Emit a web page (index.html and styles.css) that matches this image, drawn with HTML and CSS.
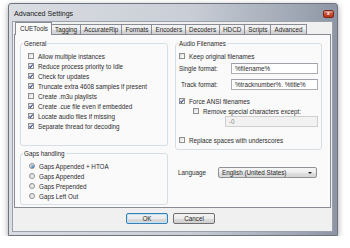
FILE: index.html
```html
<!DOCTYPE html>
<html lang="en">
<head>
<meta charset="UTF-8">
<title>Advanced Settings</title>
<link rel="stylesheet" href="styles.css">
</head>
<body>
    <div class="window">
        <div class="titlebar">
            <span class="title">Advanced Settings</span>
            <span class="close">x</span>
        </div>
        <div class="client">
            <div class="tabs">
                <span class="tab selected">CUETools</span>
                <span class="tab">Tagging</span>
                <span class="tab">AccurateRip</span>
                <span class="tab">Formats</span>
                <span class="tab">Encoders</span>
                <span class="tab">Decoders</span>
                <span class="tab">HDCD</span>
                <span class="tab">Scripts</span>
                <span class="tab">Advanced</span>
            </div>
            <div class="panel">
                <div class="col left">
                    <fieldset class="group general">
                        <legend>General</legend>
                        <div class="row"><span class="cb"></span>Allow multiple instances</div>
                        <div class="row"><span class="cb on"></span>Reduce process priority to Idle</div>
                        <div class="row"><span class="cb on"></span>Check for updates</div>
                        <div class="row"><span class="cb on"></span>Truncate extra 4608 samples if present</div>
                        <div class="row"><span class="cb"></span>Create .m3u playlists</div>
                        <div class="row"><span class="cb on"></span>Create .cue file even if embedded</div>
                        <div class="row"><span class="cb on"></span>Locate audio files if missing</div>
                        <div class="row"><span class="cb on"></span>Separate thread for decoding</div>
                    </fieldset>
                    <fieldset class="group gaps">
                        <legend>Gaps handling</legend>
                        <div class="row"><span class="rb on"></span>Gaps Appended + HTOA</div>
                        <div class="row"><span class="rb"></span>Gaps Appended</div>
                        <div class="row"><span class="rb"></span>Gaps Prepended</div>
                        <div class="row"><span class="rb"></span>Gaps Left Out</div>
                    </fieldset>
                </div>
                <div class="col right">
                    <fieldset class="group audio">
                        <legend>Audio Filenames</legend>
                        <div class="row"><span class="cb"></span>Keep original filenames</div>
                        <div class="field single">
                            <span class="label">Single format:</span>
                            <span class="input">%filename%</span>
                        </div>
                        <div class="field track">
                            <span class="label">Track format:</span>
                            <span class="input">%tracknumber%. %title%</span>
                        </div>
                        <div class="row ansi"><span class="cb on"></span>Force ANSI filenames</div>
                        <div class="row sub"><span class="cb"></span>Remove special characters except:</div>
                        <div class="field except">
                            <span class="input disabled">-0</span>
                        </div>
                        <div class="row replace"><span class="cb"></span>Replace spaces with underscores</div>
                    </fieldset>
                    <div class="lang-row">
                        <span class="label">Language</span>
                        <span class="select">English (United States)<span class="arrow"></span></span>
                    </div>
                </div>
            </div>
            <div class="buttons">
                <span class="btn default">OK</span>
                <span class="btn">Cancel</span>
            </div>
        </div>
    </div>
</body>
</html>
```

FILE: styles.css
```css
body {
    margin: 0;
    background-color: #fff;
    font-family: 'Liberation Sans', Arial, sans-serif;
    font-size: 6.3px;
    color: #2a2a2a;
}
.window {
    box-sizing: border-box;
    width: 330px;
    height: 233px;
    margin: 3px 0 0 8px;
    padding: 0 4px 3px 3px;
    border: 1px solid #6d7480;
    border-radius: 3px 3px 0 0;
    background: linear-gradient(to right, #dadde2, #c9ced6 55%, #a3aab7 85%, #8d95a4);
    box-shadow: 0 2px 6px rgba(0, 0, 0, 0.35);
    display: flex;
    flex-direction: column;
}
.titlebar {
    height: 17px;
    display: flex;
    align-items: center;
    justify-content: space-between;
    padding-left: 2px;
}
.title {
    font-size: 7.1px;
    color: #222;
    margin-top: 2px;
}
.close {
    width: 9px;
    height: 6px;
    margin: 2px -1px 0 0;
    border: 1px solid #7a2a1c;
    border-radius: 2px;
    background: linear-gradient(#e39a86, #c94a30 50%, #b8321b);
    color: #fff;
    font-size: 5px;
    line-height: 5px;
    text-align: center;
    font-weight: bold;
}
.client {
    flex: 1;
    border: 1px solid #9aa1ac;
    background-color: #f0f0f0;
    padding: 1px 1px 0 1px;
}
.tabs {
    display: flex;
    height: 11px;
    padding-left: 3px;
    align-items: flex-end;
}
.tab {
    height: 9px;
    line-height: 9px;
    padding: 0 3px;
    border: 1px solid #898c95;
    border-bottom: none;
    margin-right: -1px;
    background: linear-gradient(#f4f4f4, #ebebeb 50%, #dddddd 51%, #d0d0d0);
}
.tab.selected {
    height: 12px;
    line-height: 11px;
    margin: 0 -1px -1px -2px;
    padding: 0 3px 0 4px;
    background: #fafafa;
    position: relative;
    z-index: 1;
}
.panel {
    box-sizing: border-box;
    height: 174px;
    border: 1px solid #898c95;
    background-color: #fafafa;
    padding: 5px 0 0 5px;
    display: flex;
    gap: 7px;
}
.col {
    display: flex;
    flex-direction: column;
}
.col.left {
    width: 148px;
}
.col.right {
    width: 145px;
}
.group {
    margin: 0;
    border: 1px solid #d5dfe5;
    border-radius: 3px;
    padding: 0 3px;
}
.group legend {
    padding: 0 1px;
    height: 7px;
    line-height: 7px;
}
.row {
    display: flex;
    align-items: center;
    height: 10px;
}
.general {
    padding: 4px 4px 14px 2px;
}
.general .row {
    padding-left: 5px;
}
.gaps {
    margin-top: 4px;
    padding: 4px 4px 3px 2px;
}
.gaps .row {
    padding-left: 6px;
}
.audio {
    padding: 4px 3px 4px 2px;
}
.audio .row,
.audio .field {
    margin-left: 1px;
}
.cb {
    box-sizing: border-box;
    width: 6px;
    height: 6px;
    margin-right: 4px;
    border: 1px solid #8e8f8f;
    background: linear-gradient(135deg, #d8d8d8, #f6f6f6 70%, #fff);
    position: relative;
    flex: none;
}
.cb.on::after {
    content: '';
    position: absolute;
    left: 1px;
    top: -0.5px;
    width: 1.3px;
    height: 3px;
    border: solid #33468a;
    border-width: 0 1.2px 1.2px 0;
    transform: rotate(40deg);
}
.rb {
    box-sizing: border-box;
    width: 6px;
    height: 6px;
    margin-right: 4px;
    border: 1px solid #8e8f8f;
    border-radius: 50%;
    background: linear-gradient(135deg, #d8d8d8, #f8f8f8);
    position: relative;
    flex: none;
}
.rb.on::after {
    content: '';
    position: absolute;
    left: 0.5px;
    top: 0.5px;
    width: 3px;
    height: 3px;
    border-radius: 50%;
    background: radial-gradient(circle at 35% 35%, #8fc2f0, #1c5fa6);
}
.field {
    display: flex;
    align-items: center;
}
.field .label {
    width: 52px;
}
.field.single {
    margin-top: 2px;
}
.field.track {
    margin-top: 5px;
}
.field.track .label {
    padding-left: 2px;
    width: 50px;
}
.input {
    box-sizing: border-box;
    width: 87px;
    height: 11px;
    line-height: 9px;
    padding: 0 3px;
    border: 1px solid #abadb3;
    border-top-color: #9ea1a8;
    background: #fff;
}
.input.disabled {
    width: 93px;
    background: #f2f2f2;
    border-color: #cfcfcf;
    color: #8a8a8a;
}
.field.except {
    padding-left: 46px;
}
.row.ansi {
    margin-top: 6px;
}
.row.sub {
    padding-left: 14px;
}
.row.replace {
    margin-top: 8px;
}
.lang-row {
    display: flex;
    align-items: center;
    margin-top: 17px;
    padding-left: 3px;
}
.lang-row .label {
    width: 40px;
}
.select {
    box-sizing: border-box;
    width: 99px;
    height: 11px;
    line-height: 9px;
    padding: 0 3px;
    border: 1px solid #8f9196;
    border-radius: 2px;
    background: linear-gradient(#f7f7f7, #ececec 50%, #e0e0e0 51%, #d6d6d6);
    position: relative;
}
.arrow {
    position: absolute;
    right: 4px;
    top: 4px;
    border-left: 2px solid transparent;
    border-right: 2px solid transparent;
    border-top: 2.5px solid #222;
}
.buttons {
    display: flex;
    gap: 5px;
    padding: 5px 0 0 112px;
}
.btn {
    box-sizing: border-box;
    width: 42px;
    height: 11px;
    line-height: 9px;
    text-align: center;
    border: 1px solid #707070;
    border-radius: 2px;
    background: linear-gradient(#f2f2f2, #ebebeb 50%, #dddddd 51%, #cfcfcf);
}
.btn.default {
    border-color: #3c7fb1;
    box-shadow: inset 0 0 0 1px #bfe3f7;
}
```
